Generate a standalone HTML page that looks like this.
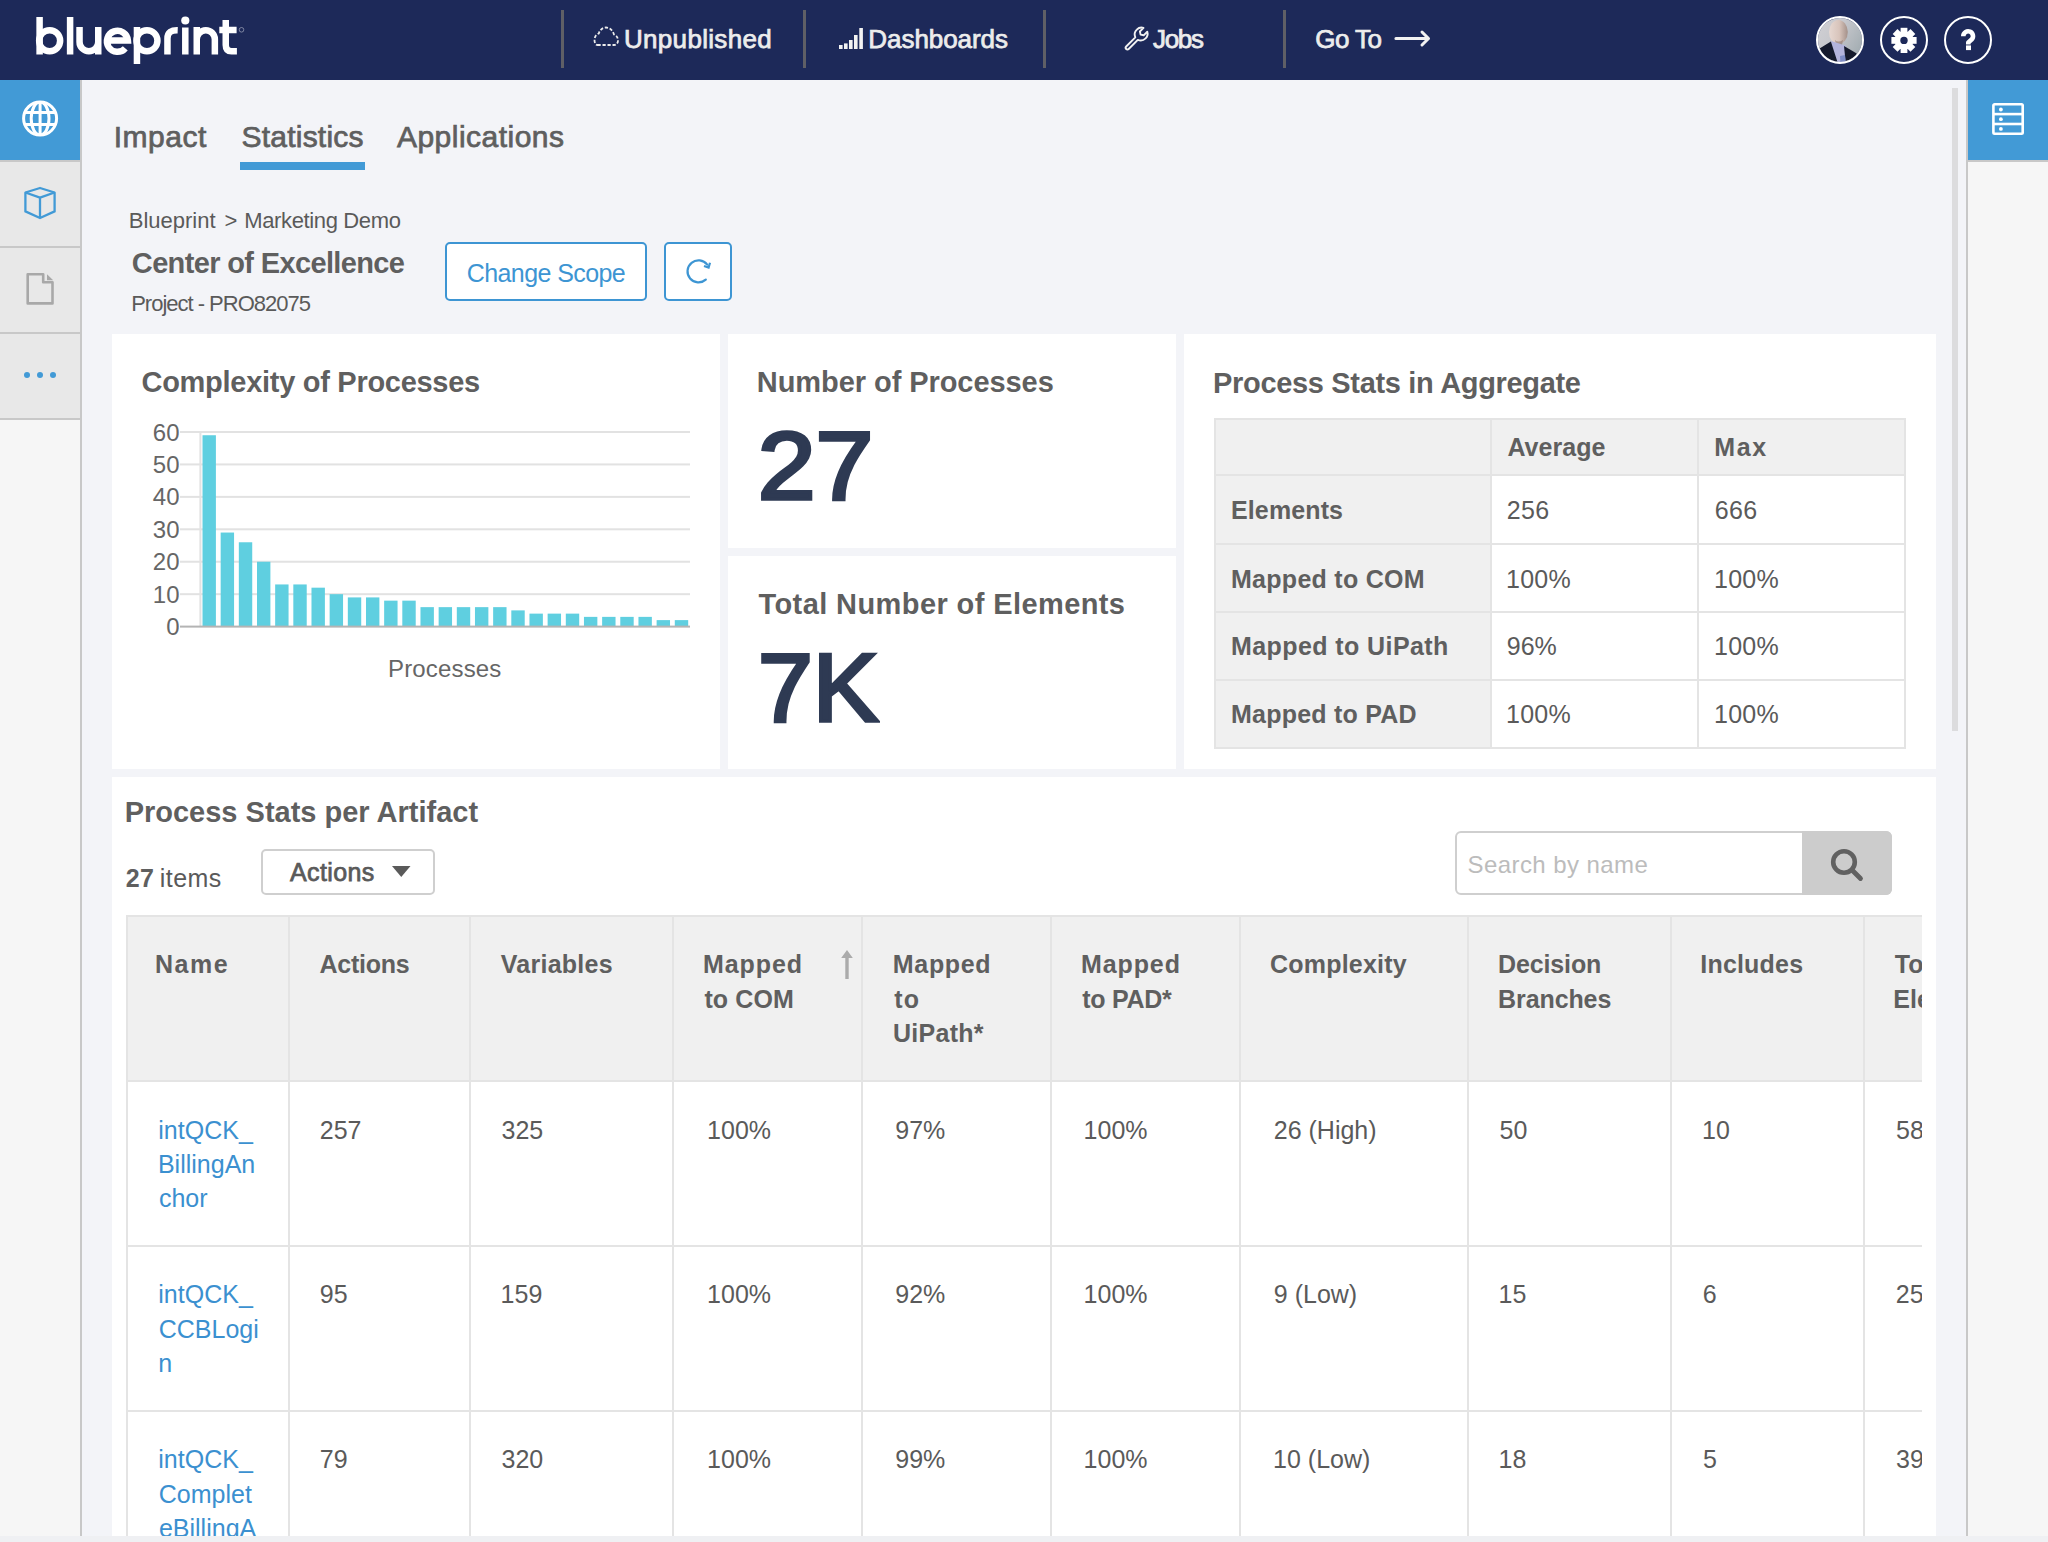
<!DOCTYPE html>
<html><head><meta charset="utf-8"><style>
html,body{margin:0;padding:0;}
body{width:2048px;height:1542px;overflow:hidden;position:relative;background:#f3f4f8;font-family:"Liberation Sans",sans-serif;}
.t{position:absolute;white-space:pre;}
.r{position:absolute;box-sizing:content-box;}
svg.r{overflow:visible;}
</style></head><body>
<div class="r" style="left:0px;top:0px;width:2048px;height:80px;background:#1d2959;"></div>
<svg class="r" style="left:0px;top:0px;" width="250" height="80" viewBox="0 0 250 80"><g fill="none" stroke="#fff" stroke-width="6.5"><path d="M39.6 17 V54.5"/><circle cx="49.65" cy="40.75" r="10.5"/><path d="M70.1 17 V54.5"/><path d="M79.55 27 V41.9 A9.35 9.35 0 0 0 98.25 41.9 V27 M98.25 41.9 V54.5"/><path d="M106.9 40.5 H127.9 A10.5 10.5 0 1 0 125.3 48.3"/><path d="M136.95 27 V64"/><circle cx="146.95" cy="40.75" r="10.5"/><path d="M167.45 54.5 V38.5 C167.45 32 171.5 30 177.7 30.2"/><path d="M185.3 27.5 V54.5"/><path d="M196.75 27 V54.5 M196.75 39.3 A9.05 9.05 0 0 1 214.85 39.3 V54.5"/><path d="M225.75 20 V45 Q225.75 51.25 231.5 51.25 H236.9 M219.3 30 H236.6"/></g><circle cx="185.3" cy="20.5" r="4.1" fill="#fff"/><circle cx="241.5" cy="29.8" r="2.3" fill="none" stroke="#b8bccc" stroke-width="0.6"/></svg>
<div class="r" style="left:561px;top:10px;width:3px;height:58px;background:#5f5f66;"></div>
<div class="r" style="left:803px;top:10px;width:3px;height:58px;background:#5f5f66;"></div>
<div class="r" style="left:1043px;top:10px;width:3px;height:58px;background:#5f5f66;"></div>
<div class="r" style="left:1283px;top:10px;width:3px;height:58px;background:#5f5f66;"></div>
<div class="t" style="left:623.99px;top:26.00px;font-size:26px;line-height:26px;font-weight:400;color:#ececec;letter-spacing:0.314px;-webkit-text-stroke:0.75px #ececec;">Unpublished</div>
<div class="t" style="left:868.36px;top:26.00px;font-size:26px;line-height:26px;font-weight:400;color:#ececec;letter-spacing:-0.072px;-webkit-text-stroke:0.75px #ececec;">Dashboards</div>
<div class="t" style="left:1153.11px;top:26.00px;font-size:26px;line-height:26px;font-weight:400;color:#ececec;letter-spacing:-1.375px;-webkit-text-stroke:0.75px #ececec;">Jobs</div>
<div class="t" style="left:1315.20px;top:26.00px;font-size:26px;line-height:26px;font-weight:400;color:#ececec;letter-spacing:-0.515px;-webkit-text-stroke:0.75px #ececec;">Go To</div>
<svg class="r" style="left:590px;top:22px;" width="32" height="28" viewBox="0 0 32 28"><path d="M7.5 23 H24 C26.5 23 28 21 28 18.5 C28 15.5 26.5 13.5 24 12.5 C22.5 8 19.5 5.5 16 5.5 C12.5 5.5 9.8 8 8.8 11.5 C6 12.5 4.5 15 4.5 18 C4.5 20.8 5.5 23 7.5 23 Z" fill="none" stroke="#ececec" stroke-width="1.8" stroke-dasharray="3.2 1.8"/></svg>
<svg class="r" style="left:835px;top:20px;" width="30" height="32" viewBox="0 0 30 32"><rect x="4" y="25" width="3.6" height="4" fill="#f2f2f2"/><rect x="9" y="23.4" width="3.6" height="5.600000000000001" fill="#f2f2f2"/><rect x="14" y="20" width="3.6" height="9" fill="#f2f2f2"/><rect x="19" y="15" width="3.6" height="14" fill="#f2f2f2"/><rect x="24.299999999999955" y="8" width="3.6" height="21" fill="#f2f2f2"/></svg>
<svg class="r" style="left:1118.5px;top:20.8px;" width="34" height="32" viewBox="0 0 34 32"><g transform="translate(4,4)"><path d="M3.2 21.5 L12.3 12.4 C11.2 9.8 11.7 6.6 13.8 4.6 C15.6 2.8 18.2 2.2 20.5 2.9 L16.9 6.5 L17.6 9.6 L20.7 10.3 L24.3 6.7 C25 9 24.4 11.6 22.6 13.4 C20.6 15.4 17.4 16 14.8 14.9 L5.7 24 C5 24.7 3.9 24.7 3.2 24 C2.5 23.3 2.5 22.2 3.2 21.5 Z" fill="none" stroke="#f2f2f2" stroke-width="1.9" stroke-linejoin="round"/></g></svg>
<svg class="r" style="left:1390px;top:26px;" width="44" height="26" viewBox="0 0 44 26"><path d="M5.9 12.5 H38.5 M32 6 L38.5 12.5 L32 19" fill="none" stroke="#f2f2f2" stroke-width="3" stroke-linecap="round" stroke-linejoin="round"/></svg>
<svg class="r" style="left:1816px;top:16px;" width="48" height="48" viewBox="0 0 48 48"><defs><clipPath id="avc"><circle cx="24" cy="24" r="22"/></clipPath><linearGradient id="avg" x1="0" y1="0" x2="1" y2="0.6"><stop offset="0" stop-color="#d2d1d5"/><stop offset="0.5" stop-color="#c6c7cc"/><stop offset="1" stop-color="#a3adb2"/></linearGradient><linearGradient id="avf" x1="0" y1="0" x2="1" y2="0"><stop offset="0" stop-color="#e6d8d2"/><stop offset="0.55" stop-color="#d8c4bb"/><stop offset="1" stop-color="#a39089"/></linearGradient></defs><g clip-path="url(#avc)"><rect width="48" height="48" fill="url(#avg)"/><ellipse cx="22.4" cy="16" rx="9.4" ry="12" fill="url(#avf)"/><path d="M19 24 Q22 27 27 24 L26 29 L20 29 Z" fill="#8a7670" opacity="0.6"/><path d="M14.9 25 L30.1 29.8 L29.8 48 L21.4 48 Z" fill="#b3b4dc"/><path d="M0 34 L4 32.3 L14.9 25.4 L22.1 48 L0 48 Z" fill="#151a2d"/><path d="M28 30.1 L39.9 37 L48 44 L48 48 L29.8 48 Z" fill="#151a2d"/><path d="M24 40 L29 39 L29.8 48 L24.5 48 Z" fill="#7d8cc6"/></g><circle cx="24" cy="24" r="23" fill="none" stroke="#fff" stroke-width="2"/></svg>
<div class="r" style="left:1880px;top:16px;width:44px;height:44px;border:2px solid #fff;border-radius:50%;"></div>
<svg class="r" style="left:1880px;top:16px;" width="48" height="48" viewBox="0 0 48 48"><g transform="translate(24,24.4)"><rect x="-3.4" y="-12.6" width="6.8" height="6" fill="#fff" transform="rotate(0)"/><rect x="-3.4" y="-12.6" width="6.8" height="6" fill="#fff" transform="rotate(45)"/><rect x="-3.4" y="-12.6" width="6.8" height="6" fill="#fff" transform="rotate(90)"/><rect x="-3.4" y="-12.6" width="6.8" height="6" fill="#fff" transform="rotate(135)"/><rect x="-3.4" y="-12.6" width="6.8" height="6" fill="#fff" transform="rotate(180)"/><rect x="-3.4" y="-12.6" width="6.8" height="6" fill="#fff" transform="rotate(225)"/><rect x="-3.4" y="-12.6" width="6.8" height="6" fill="#fff" transform="rotate(270)"/><rect x="-3.4" y="-12.6" width="6.8" height="6" fill="#fff" transform="rotate(315)"/><circle r="9.3" fill="#fff"/><circle r="3.7" fill="#1d2959"/></g></svg>
<div class="r" style="left:1944px;top:16px;width:44px;height:44px;border:2px solid #fff;border-radius:50%;"></div>
<svg class="r" style="left:1944px;top:16px;" width="48" height="48" viewBox="0 0 48 48"><path d="M19.3 20.15 A4.85 4.85 0 1 1 27.6 23.6 L24.3 26.4 V28.4" fill="none" stroke="#fff" stroke-width="4.6" stroke-linejoin="round"/><rect x="22" y="29.4" width="5" height="4.7" fill="#fff"/></svg>
<div class="r" style="left:0px;top:80px;width:80px;height:1456px;background:#f6f6f6;"></div>
<div class="r" style="left:80px;top:80px;width:2px;height:1456px;background:#c8c8c8;"></div>
<div class="r" style="left:0px;top:80px;width:80px;height:80px;background:#429ad6;"></div>
<div class="r" style="left:0px;top:162px;width:80px;height:84px;background:#e8e8e8;"></div>
<div class="r" style="left:0px;top:248px;width:80px;height:84px;background:#e8e8e8;"></div>
<div class="r" style="left:0px;top:334px;width:80px;height:84px;background:#e8e8e8;"></div>
<div class="r" style="left:0px;top:160px;width:80px;height:2px;background:#c8c8c8;"></div>
<div class="r" style="left:0px;top:246px;width:80px;height:2px;background:#c8c8c8;"></div>
<div class="r" style="left:0px;top:332px;width:80px;height:2px;background:#c8c8c8;"></div>
<div class="r" style="left:0px;top:418px;width:80px;height:2px;background:#c8c8c8;"></div>
<svg class="r" style="left:20px;top:98px;" width="40" height="40" viewBox="0 0 40 40"><defs><clipPath id="gc"><circle cx="20.1" cy="20.6" r="16.5"/></clipPath></defs><g fill="none" stroke="#fff" stroke-width="3"><circle cx="20.1" cy="20.6" r="16.5"/><g clip-path="url(#gc)"><ellipse cx="20.1" cy="20.6" rx="8.9" ry="16.5"/><line x1="20.1" y1="2" x2="20.1" y2="39"/><path d="M2 14.5 H38 M2 26.5 H38"/></g></g></svg>
<svg class="r" style="left:22px;top:185px;" width="36" height="36" viewBox="0 0 36 36"><g fill="none" stroke="#429ad6" stroke-width="2.3" stroke-linejoin="round"><path d="M18 3 L32.6 7.5 V26.4 L18 33 L3.4 26.4 V7.5 Z"/><path d="M3.4 7.5 L18 12.6 L32.6 7.5 M18 12.6 V33"/></g></svg>
<svg class="r" style="left:24px;top:271px;" width="34" height="36" viewBox="0 0 34 36"><path d="M3.7 3.3 H19.2 V11.3 H28.5 V32.4 H3.7 Z" fill="none" stroke="#a8a8a8" stroke-width="2.6" stroke-linejoin="round"/><path d="M23 3.3 L29.2 9.3 H23 Z" fill="#a8a8a8"/></svg>
<div class="r" style="left:24px;top:372px;width:6px;height:6px;border-radius:50%;background:#429ad6"></div>
<div class="r" style="left:37px;top:372px;width:6px;height:6px;border-radius:50%;background:#429ad6"></div>
<div class="r" style="left:50px;top:372px;width:6px;height:6px;border-radius:50%;background:#429ad6"></div>
<div class="r" style="left:1966px;top:80px;width:2px;height:1456px;background:#c8c8c8;"></div>
<div class="r" style="left:1968px;top:80px;width:80px;height:1456px;background:#f6f6f6;"></div>
<div class="r" style="left:1968px;top:80px;width:80px;height:80px;background:#429ad6;"></div>
<div class="r" style="left:1968px;top:160px;width:80px;height:2px;background:#c8c8c8;"></div>
<svg class="r" style="left:1990px;top:101px;" width="36" height="36" viewBox="0 0 36 36"><g fill="none" stroke="#fff" stroke-width="2.6"><rect x="3.4" y="3.3" width="29.3" height="29.5" rx="1.2"/><line x1="3.4" y1="13.1" x2="32.7" y2="13.1"/><line x1="3.4" y1="23" x2="32.7" y2="23"/></g><circle cx="10.9" cy="8.5" r="1.9" fill="#fff"/><circle cx="10.9" cy="18.2" r="1.9" fill="#fff"/><circle cx="10.9" cy="27.9" r="1.9" fill="#fff"/></svg>
<div class="r" style="left:1952px;top:88px;width:6px;height:643px;background:#dcdcde;"></div>
<div class="r" style="left:0px;top:1536px;width:2048px;height:6px;background:#eff0f3;"></div>
<div class="t" style="left:113.72px;top:122.00px;font-size:30px;line-height:30px;font-weight:400;color:#5f5f5f;letter-spacing:0.500px;-webkit-text-stroke:0.75px #5f5f5f;">Impact</div>
<div class="t" style="left:241.45px;top:122.00px;font-size:30px;line-height:30px;font-weight:400;color:#5f5f5f;letter-spacing:0.233px;-webkit-text-stroke:0.75px #5f5f5f;">Statistics</div>
<div class="t" style="left:396.93px;top:122.00px;font-size:30px;line-height:30px;font-weight:400;color:#5f5f5f;letter-spacing:0.486px;-webkit-text-stroke:0.75px #5f5f5f;">Applications</div>
<div class="r" style="left:240px;top:162px;width:125px;height:8px;background:#429ad6;"></div>
<div class="t" style="left:128.78px;top:209.70px;font-size:22px;line-height:22px;font-weight:400;color:#5a5a5a;">Blueprint</div>
<div class="t" style="left:224.60px;top:209.70px;font-size:22px;line-height:22px;font-weight:400;color:#5a5a5a;">&gt;</div>
<div class="t" style="left:244.19px;top:209.70px;font-size:22px;line-height:22px;font-weight:400;color:#5a5a5a;letter-spacing:-0.360px;">Marketing Demo</div>
<div class="t" style="left:131.84px;top:249.00px;font-size:29px;line-height:29px;font-weight:700;color:#5f5f5f;letter-spacing:-0.641px;">Center of Excellence</div>
<div class="t" style="left:131.19px;top:293.00px;font-size:22px;line-height:22px;font-weight:400;color:#5a5a5a;letter-spacing:-1.009px;">Project - PRO82075</div>
<div class="r" style="left:445px;top:242px;width:198px;height:55px;border:2px solid #3d95d3;border-radius:5px;background:#fff"></div>
<div class="t" style="left:466.75px;top:260.80px;font-size:25px;line-height:25px;font-weight:400;color:#3d95d3;letter-spacing:-0.588px;">Change Scope</div>
<div class="r" style="left:664px;top:242px;width:64px;height:55px;border:2px solid #3d95d3;border-radius:5px;background:#fff"></div>
<svg class="r" style="left:680px;top:254px;" width="36" height="36" viewBox="0 0 36 36"><path d="M27.2 10.6 A11 11 0 1 0 25.8 25.6" fill="none" stroke="#3d95d3" stroke-width="2.2" stroke-linecap="round"/><path d="M24 12 L28.6 13.6 L30 8.8" fill="none" stroke="#3d95d3" stroke-width="2.2" stroke-linejoin="miter"/></svg>
<div class="r" style="left:112px;top:334px;width:608px;height:435px;background:#fff;"></div>
<div class="r" style="left:728px;top:334px;width:448px;height:214px;background:#fff;"></div>
<div class="r" style="left:728px;top:556px;width:448px;height:213px;background:#fff;"></div>
<div class="r" style="left:1184px;top:334px;width:752px;height:435px;background:#fff;"></div>
<div class="r" style="left:112px;top:777px;width:1824px;height:759px;background:#fff;"></div>
<div class="t" style="left:141.54px;top:368.00px;font-size:29px;line-height:29px;font-weight:700;color:#5f5f5f;letter-spacing:-0.285px;">Complexity of Processes</div>
<div class="t" style="left:756.84px;top:368.00px;font-size:29px;line-height:29px;font-weight:700;color:#5f5f5f;letter-spacing:-0.067px;">Number of Processes</div>
<div class="t" style="left:758.51px;top:589.60px;font-size:29px;line-height:29px;font-weight:700;color:#5f5f5f;letter-spacing:0.405px;">Total Number of Elements</div>
<div class="t" style="left:1213.04px;top:368.50px;font-size:29px;line-height:29px;font-weight:700;color:#5f5f5f;letter-spacing:-0.326px;">Process Stats in Aggregate</div>
<div class="t" style="left:757.75px;top:417.00px;font-size:97px;line-height:97px;font-weight:400;color:#2e3a53;transform:scaleX(1.0718);transform-origin:4.85px 0;-webkit-text-stroke:3.6px #2e3a53;">27</div>
<div class="t" style="left:757.95px;top:639.00px;font-size:97px;line-height:97px;font-weight:400;color:#2e3a53;transform:scaleX(1.0167);transform-origin:4.85px 0;-webkit-text-stroke:3.6px #2e3a53;">7K</div>
<svg class="r" style="left:0px;top:0px;left:0;top:0;" width="720" height="700" viewBox="0 0 720 700"><rect x="180" y="593.17" width="510" height="2" fill="#e2e2e2"/><rect x="180" y="560.73" width="510" height="2" fill="#e2e2e2"/><rect x="180" y="528.30" width="510" height="2" fill="#e2e2e2"/><rect x="180" y="495.87" width="510" height="2" fill="#e2e2e2"/><rect x="180" y="463.43" width="510" height="2" fill="#e2e2e2"/><rect x="180" y="431.00" width="510" height="2" fill="#e2e2e2"/><rect x="199.4" y="432" width="2" height="195" fill="#e2e2e2"/><rect x="202.50" y="435.24" width="13.4" height="191.36" fill="#5fcfe0"/><rect x="220.66" y="532.54" width="13.4" height="94.06" fill="#5fcfe0"/><rect x="238.83" y="542.27" width="13.4" height="84.33" fill="#5fcfe0"/><rect x="257.00" y="561.73" width="13.4" height="64.87" fill="#5fcfe0"/><rect x="275.16" y="584.44" width="13.4" height="42.16" fill="#5fcfe0"/><rect x="293.32" y="584.44" width="13.4" height="42.16" fill="#5fcfe0"/><rect x="311.49" y="587.68" width="13.4" height="38.92" fill="#5fcfe0"/><rect x="329.65" y="594.17" width="13.4" height="32.43" fill="#5fcfe0"/><rect x="347.82" y="597.41" width="13.4" height="29.19" fill="#5fcfe0"/><rect x="365.99" y="597.41" width="13.4" height="29.19" fill="#5fcfe0"/><rect x="384.15" y="600.65" width="13.4" height="25.95" fill="#5fcfe0"/><rect x="402.31" y="600.65" width="13.4" height="25.95" fill="#5fcfe0"/><rect x="420.48" y="607.14" width="13.4" height="19.46" fill="#5fcfe0"/><rect x="438.64" y="607.14" width="13.4" height="19.46" fill="#5fcfe0"/><rect x="456.81" y="607.14" width="13.4" height="19.46" fill="#5fcfe0"/><rect x="474.97" y="607.14" width="13.4" height="19.46" fill="#5fcfe0"/><rect x="493.14" y="607.14" width="13.4" height="19.46" fill="#5fcfe0"/><rect x="511.31" y="610.38" width="13.4" height="16.22" fill="#5fcfe0"/><rect x="529.47" y="613.63" width="13.4" height="12.97" fill="#5fcfe0"/><rect x="547.63" y="613.63" width="13.4" height="12.97" fill="#5fcfe0"/><rect x="565.80" y="613.63" width="13.4" height="12.97" fill="#5fcfe0"/><rect x="583.96" y="616.87" width="13.4" height="9.73" fill="#5fcfe0"/><rect x="602.13" y="616.87" width="13.4" height="9.73" fill="#5fcfe0"/><rect x="620.29" y="616.87" width="13.4" height="9.73" fill="#5fcfe0"/><rect x="638.46" y="616.87" width="13.4" height="9.73" fill="#5fcfe0"/><rect x="656.62" y="620.11" width="13.4" height="6.49" fill="#5fcfe0"/><rect x="674.79" y="620.11" width="13.4" height="6.49" fill="#5fcfe0"/><rect x="180" y="625.6" width="510" height="2" fill="#b4b4b4"/></svg>
<div class="t" style="left:-0.96px;top:615.10px;font-size:24px;line-height:24px;font-weight:400;color:#666;width:179.5px;text-align:right;left:0;">0</div>
<div class="t" style="left:-1.80px;top:582.67px;font-size:24px;line-height:24px;font-weight:400;color:#666;width:179.5px;text-align:right;left:0;">10</div>
<div class="t" style="left:-1.20px;top:550.23px;font-size:24px;line-height:24px;font-weight:400;color:#666;width:179.5px;text-align:right;left:0;">20</div>
<div class="t" style="left:-0.90px;top:517.80px;font-size:24px;line-height:24px;font-weight:400;color:#666;width:179.5px;text-align:right;left:0;">30</div>
<div class="t" style="left:-0.54px;top:485.37px;font-size:24px;line-height:24px;font-weight:400;color:#666;width:179.5px;text-align:right;left:0;">40</div>
<div class="t" style="left:-0.96px;top:452.93px;font-size:24px;line-height:24px;font-weight:400;color:#666;width:179.5px;text-align:right;left:0;">50</div>
<div class="t" style="left:-1.20px;top:420.50px;font-size:24px;line-height:24px;font-weight:400;color:#666;width:179.5px;text-align:right;left:0;">60</div>
<div class="t" style="left:388.02px;top:656.60px;font-size:24px;line-height:24px;font-weight:400;color:#666;letter-spacing:0.162px;">Processes</div>
<div class="r" style="left:1214px;top:418px;width:692px;height:331px;background:#fff;"></div>
<div class="r" style="left:1214px;top:418px;width:692px;height:57px;background:#f0f0f0;"></div>
<div class="r" style="left:1214px;top:418px;width:277px;height:331px;background:#f0f0f0;"></div>
<div class="r" style="left:1214px;top:418px;width:2px;height:331px;background:#e4e4e4;"></div>
<div class="r" style="left:1490px;top:418px;width:2px;height:331px;background:#e4e4e4;"></div>
<div class="r" style="left:1697px;top:418px;width:2px;height:331px;background:#e4e4e4;"></div>
<div class="r" style="left:1904px;top:418px;width:2px;height:331px;background:#e4e4e4;"></div>
<div class="r" style="left:1214px;top:418px;width:692px;height:2px;background:#e4e4e4;"></div>
<div class="r" style="left:1214px;top:474px;width:692px;height:2px;background:#e4e4e4;"></div>
<div class="r" style="left:1214px;top:543px;width:692px;height:2px;background:#e4e4e4;"></div>
<div class="r" style="left:1214px;top:611px;width:692px;height:2px;background:#e4e4e4;"></div>
<div class="r" style="left:1214px;top:679px;width:692px;height:2px;background:#e4e4e4;"></div>
<div class="r" style="left:1214px;top:747px;width:692px;height:2px;background:#e4e4e4;"></div>
<div class="t" style="left:1507.38px;top:435.00px;font-size:25px;line-height:25px;font-weight:700;color:#5f5f5f;letter-spacing:0.058px;">Average</div>
<div class="t" style="left:1714.31px;top:435.00px;font-size:25px;line-height:25px;font-weight:700;color:#5f5f5f;letter-spacing:1.625px;">Max</div>
<div class="t" style="left:1231.01px;top:497.70px;font-size:25px;line-height:25px;font-weight:700;color:#5f5f5f;letter-spacing:0.123px;">Elements</div>
<div class="t" style="left:1506.75px;top:497.70px;font-size:25px;line-height:25px;font-weight:400;color:#5a5a5a;letter-spacing:0.312px;">256</div>
<div class="t" style="left:1714.75px;top:497.70px;font-size:25px;line-height:25px;font-weight:400;color:#5a5a5a;letter-spacing:0.312px;">666</div>
<div class="t" style="left:1231.01px;top:566.80px;font-size:25px;line-height:25px;font-weight:700;color:#5f5f5f;letter-spacing:0.280px;">Mapped to COM</div>
<div class="t" style="left:1506.12px;top:566.80px;font-size:25px;line-height:25px;font-weight:400;color:#5a5a5a;letter-spacing:0.204px;">100%</div>
<div class="t" style="left:1714.12px;top:566.80px;font-size:25px;line-height:25px;font-weight:400;color:#5a5a5a;letter-spacing:0.204px;">100%</div>
<div class="t" style="left:1231.01px;top:634.40px;font-size:25px;line-height:25px;font-weight:700;color:#5f5f5f;letter-spacing:0.415px;">Mapped to UiPath</div>
<div class="t" style="left:1506.81px;top:634.40px;font-size:25px;line-height:25px;font-weight:400;color:#5a5a5a;">96%</div>
<div class="t" style="left:1714.12px;top:634.40px;font-size:25px;line-height:25px;font-weight:400;color:#5a5a5a;letter-spacing:0.204px;">100%</div>
<div class="t" style="left:1231.01px;top:702.40px;font-size:25px;line-height:25px;font-weight:700;color:#5f5f5f;letter-spacing:0.223px;">Mapped to PAD</div>
<div class="t" style="left:1506.12px;top:702.40px;font-size:25px;line-height:25px;font-weight:400;color:#5a5a5a;letter-spacing:0.204px;">100%</div>
<div class="t" style="left:1714.12px;top:702.40px;font-size:25px;line-height:25px;font-weight:400;color:#5a5a5a;letter-spacing:0.204px;">100%</div>
<div class="t" style="left:124.64px;top:798.00px;font-size:29px;line-height:29px;font-weight:700;color:#5f5f5f;">Process Stats per Artifact</div>
<div class="t" style="left:125.72px;top:866.00px;font-size:25px;line-height:25px;font-weight:700;color:#5f5f5f;letter-spacing:0.488px;">27</div>
<div class="t" style="left:159.71px;top:866.00px;font-size:25px;line-height:25px;font-weight:400;color:#5a5a5a;letter-spacing:0.478px;">items</div>
<div class="r" style="left:261px;top:849px;width:170px;height:42px;border:2px solid #cfcfcf;border-radius:5px;background:#fff"></div>
<div class="t" style="left:289.94px;top:860.00px;font-size:25px;line-height:25px;font-weight:400;color:#5a5a5a;letter-spacing:0.390px;-webkit-text-stroke:0.75px #5a5a5a;">Actions</div>
<svg class="r" style="left:390px;top:864px;" width="24" height="16" viewBox="0 0 24 16"><path d="M2 2 H20.5 L11.25 13 Z" fill="#5a5a5a"/></svg>
<div class="r" style="left:1455px;top:831px;width:433px;height:60px;border:2px solid #cfcfcf;border-radius:6px;background:#fff"></div>
<div class="r" style="left:1802px;top:831px;width:90px;height:64px;border-radius:0 6px 6px 0;background:#cccccc"></div>
<div class="t" style="left:1467.62px;top:853.00px;font-size:24px;line-height:24px;font-weight:400;color:#bcbcbc;letter-spacing:0.414px;">Search by name</div>
<svg class="r" style="left:1820px;top:840px;" width="50" height="50" viewBox="0 0 50 50"><circle cx="24" cy="22" r="10.8" fill="none" stroke="#616161" stroke-width="4.6"/><line x1="32" y1="30" x2="40.5" y2="38.5" stroke="#616161" stroke-width="4.8" stroke-linecap="round"/></svg>
<div class="r" style="left:126px;top:915px;width:1796px;height:621px;overflow:hidden">
<div class="r" style="left:0.00px;top:0.00px;width:1900px;height:167px;background:#f0f0f0"></div><div class="r" style="left:0.00px;top:0.00px;width:2px;height:640px;background:#e4e4e4"></div><div class="r" style="left:162.00px;top:0.00px;width:2px;height:640px;background:#e4e4e4"></div><div class="r" style="left:343.00px;top:0.00px;width:2px;height:640px;background:#e4e4e4"></div><div class="r" style="left:546.00px;top:0.00px;width:2px;height:640px;background:#e4e4e4"></div><div class="r" style="left:735.00px;top:0.00px;width:2px;height:640px;background:#e4e4e4"></div><div class="r" style="left:924.00px;top:0.00px;width:2px;height:640px;background:#e4e4e4"></div><div class="r" style="left:1113.00px;top:0.00px;width:2px;height:640px;background:#e4e4e4"></div><div class="r" style="left:1341.00px;top:0.00px;width:2px;height:640px;background:#e4e4e4"></div><div class="r" style="left:1544.00px;top:0.00px;width:2px;height:640px;background:#e4e4e4"></div><div class="r" style="left:1737.00px;top:0.00px;width:2px;height:640px;background:#e4e4e4"></div><div class="r" style="left:0.00px;top:0.00px;width:1900px;height:2px;background:#e4e4e4"></div><div class="r" style="left:0.00px;top:165.00px;width:1900px;height:2px;background:#e4e4e4"></div><div class="r" style="left:0.00px;top:330.00px;width:1900px;height:2px;background:#e4e4e4"></div><div class="r" style="left:0.00px;top:495.00px;width:1900px;height:2px;background:#e4e4e4"></div>
</div>
<div class="t" style="left:154.91px;top:952.20px;font-size:25px;line-height:25px;font-weight:700;color:#5f5f5f;letter-spacing:1.579px;">Name</div>
<div class="t" style="left:319.38px;top:952.20px;font-size:25px;line-height:25px;font-weight:700;color:#5f5f5f;letter-spacing:-0.217px;">Actions</div>
<div class="t" style="left:500.81px;top:952.20px;font-size:25px;line-height:25px;font-weight:700;color:#5f5f5f;letter-spacing:0.242px;">Variables</div>
<div class="t" style="left:703.01px;top:952.20px;font-size:25px;line-height:25px;font-weight:700;color:#5f5f5f;letter-spacing:0.915px;">Mapped</div>
<div class="t" style="left:704.39px;top:986.60px;font-size:25px;line-height:25px;font-weight:700;color:#5f5f5f;letter-spacing:0.113px;">to COM</div>
<div class="t" style="left:892.81px;top:952.20px;font-size:25px;line-height:25px;font-weight:700;color:#5f5f5f;letter-spacing:0.675px;">Mapped</div>
<div class="t" style="left:894.19px;top:986.60px;font-size:25px;line-height:25px;font-weight:700;color:#5f5f5f;letter-spacing:1.188px;">to</div>
<div class="t" style="left:893.00px;top:1021.00px;font-size:25px;line-height:25px;font-weight:700;color:#5f5f5f;letter-spacing:0.271px;">UiPath*</div>
<div class="t" style="left:1080.91px;top:952.20px;font-size:25px;line-height:25px;font-weight:700;color:#5f5f5f;letter-spacing:0.915px;">Mapped</div>
<div class="t" style="left:1082.29px;top:986.60px;font-size:25px;line-height:25px;font-weight:700;color:#5f5f5f;letter-spacing:-0.312px;">to PAD*</div>
<div class="t" style="left:1270.00px;top:952.20px;font-size:25px;line-height:25px;font-weight:700;color:#5f5f5f;letter-spacing:0.219px;">Complexity</div>
<div class="t" style="left:1498.11px;top:952.20px;font-size:25px;line-height:25px;font-weight:700;color:#5f5f5f;letter-spacing:-0.143px;">Decision</div>
<div class="t" style="left:1498.11px;top:986.60px;font-size:25px;line-height:25px;font-weight:700;color:#5f5f5f;letter-spacing:-0.107px;">Branches</div>
<div class="t" style="left:1700.31px;top:952.20px;font-size:25px;line-height:25px;font-weight:700;color:#5f5f5f;letter-spacing:0.188px;">Includes</div>
<div class="t" style="left:1894.75px;top:952.20px;font-size:25px;line-height:25px;font-weight:700;color:#5f5f5f;">To</div>
<div class="t" style="left:1893.31px;top:986.60px;font-size:25px;line-height:25px;font-weight:700;color:#5f5f5f;">Ele</div>
<svg class="r" style="left:836px;top:948px;" width="20" height="34" viewBox="0 0 20 34"><path d="M11 2 L5.2 10 H9.3 V31 H12.7 V10 H16.8 Z" fill="#ababab"/></svg>
<div class="t" style="left:158.31px;top:1117.50px;font-size:25px;line-height:25px;font-weight:400;color:#3b90d0;">intQCK_</div>
<div class="t" style="left:157.94px;top:1151.80px;font-size:25px;line-height:25px;font-weight:400;color:#3b90d0;">BillingAn</div>
<div class="t" style="left:158.94px;top:1186.10px;font-size:25px;line-height:25px;font-weight:400;color:#3b90d0;">chor</div>
<div class="t" style="left:319.75px;top:1117.50px;font-size:25px;line-height:25px;font-weight:400;color:#5a5a5a;">257</div>
<div class="t" style="left:501.56px;top:1117.50px;font-size:25px;line-height:25px;font-weight:400;color:#5a5a5a;">325</div>
<div class="t" style="left:707.12px;top:1117.50px;font-size:25px;line-height:25px;font-weight:400;color:#5a5a5a;">100%</div>
<div class="t" style="left:895.31px;top:1117.50px;font-size:25px;line-height:25px;font-weight:400;color:#5a5a5a;">97%</div>
<div class="t" style="left:1083.62px;top:1117.50px;font-size:25px;line-height:25px;font-weight:400;color:#5a5a5a;">100%</div>
<div class="t" style="left:1273.75px;top:1117.50px;font-size:25px;line-height:25px;font-weight:400;color:#5a5a5a;">26 (High)</div>
<div class="t" style="left:1499.50px;top:1117.50px;font-size:25px;line-height:25px;font-weight:400;color:#5a5a5a;">50</div>
<div class="t" style="left:1702.12px;top:1117.50px;font-size:25px;line-height:25px;font-weight:400;color:#5a5a5a;">10</div>
<div class="t" style="left:1896.00px;top:1117.50px;font-size:25px;line-height:25px;font-weight:400;color:#5a5a5a;">58</div>
<div class="t" style="left:158.31px;top:1282.40px;font-size:25px;line-height:25px;font-weight:400;color:#3b90d0;">intQCK_</div>
<div class="t" style="left:158.75px;top:1316.70px;font-size:25px;line-height:25px;font-weight:400;color:#3b90d0;">CCBLogi</div>
<div class="t" style="left:158.31px;top:1351.00px;font-size:25px;line-height:25px;font-weight:400;color:#3b90d0;">n</div>
<div class="t" style="left:319.81px;top:1282.40px;font-size:25px;line-height:25px;font-weight:400;color:#5a5a5a;">95</div>
<div class="t" style="left:500.62px;top:1282.40px;font-size:25px;line-height:25px;font-weight:400;color:#5a5a5a;">159</div>
<div class="t" style="left:707.12px;top:1282.40px;font-size:25px;line-height:25px;font-weight:400;color:#5a5a5a;">100%</div>
<div class="t" style="left:895.31px;top:1282.40px;font-size:25px;line-height:25px;font-weight:400;color:#5a5a5a;">92%</div>
<div class="t" style="left:1083.62px;top:1282.40px;font-size:25px;line-height:25px;font-weight:400;color:#5a5a5a;">100%</div>
<div class="t" style="left:1273.81px;top:1282.40px;font-size:25px;line-height:25px;font-weight:400;color:#5a5a5a;">9 (Low)</div>
<div class="t" style="left:1498.62px;top:1282.40px;font-size:25px;line-height:25px;font-weight:400;color:#5a5a5a;">15</div>
<div class="t" style="left:1702.75px;top:1282.40px;font-size:25px;line-height:25px;font-weight:400;color:#5a5a5a;">6</div>
<div class="t" style="left:1895.75px;top:1282.40px;font-size:25px;line-height:25px;font-weight:400;color:#5a5a5a;">25</div>
<div class="t" style="left:158.31px;top:1447.30px;font-size:25px;line-height:25px;font-weight:400;color:#3b90d0;">intQCK_</div>
<div class="t" style="left:158.75px;top:1481.60px;font-size:25px;line-height:25px;font-weight:400;color:#3b90d0;">Complet</div>
<div class="t" style="left:158.94px;top:1515.90px;font-size:25px;line-height:25px;font-weight:400;color:#3b90d0;">eBillingA</div>
<div class="t" style="left:319.75px;top:1447.30px;font-size:25px;line-height:25px;font-weight:400;color:#5a5a5a;">79</div>
<div class="t" style="left:501.56px;top:1447.30px;font-size:25px;line-height:25px;font-weight:400;color:#5a5a5a;">320</div>
<div class="t" style="left:707.12px;top:1447.30px;font-size:25px;line-height:25px;font-weight:400;color:#5a5a5a;">100%</div>
<div class="t" style="left:895.31px;top:1447.30px;font-size:25px;line-height:25px;font-weight:400;color:#5a5a5a;">99%</div>
<div class="t" style="left:1083.62px;top:1447.30px;font-size:25px;line-height:25px;font-weight:400;color:#5a5a5a;">100%</div>
<div class="t" style="left:1273.12px;top:1447.30px;font-size:25px;line-height:25px;font-weight:400;color:#5a5a5a;">10 (Low)</div>
<div class="t" style="left:1498.62px;top:1447.30px;font-size:25px;line-height:25px;font-weight:400;color:#5a5a5a;">18</div>
<div class="t" style="left:1703.00px;top:1447.30px;font-size:25px;line-height:25px;font-weight:400;color:#5a5a5a;">5</div>
<div class="t" style="left:1896.06px;top:1447.30px;font-size:25px;line-height:25px;font-weight:400;color:#5a5a5a;">39</div>
<div class="r" style="left:1922px;top:1082px;width:14px;height:454px;background:#fff;"></div>
<div class="r" style="left:1922px;top:915px;width:14px;height:167px;background:#fff;"></div>
<div class="r" style="left:0px;top:1536px;width:2048px;height:6px;background:#eff0f3;"></div>
</body></html>
